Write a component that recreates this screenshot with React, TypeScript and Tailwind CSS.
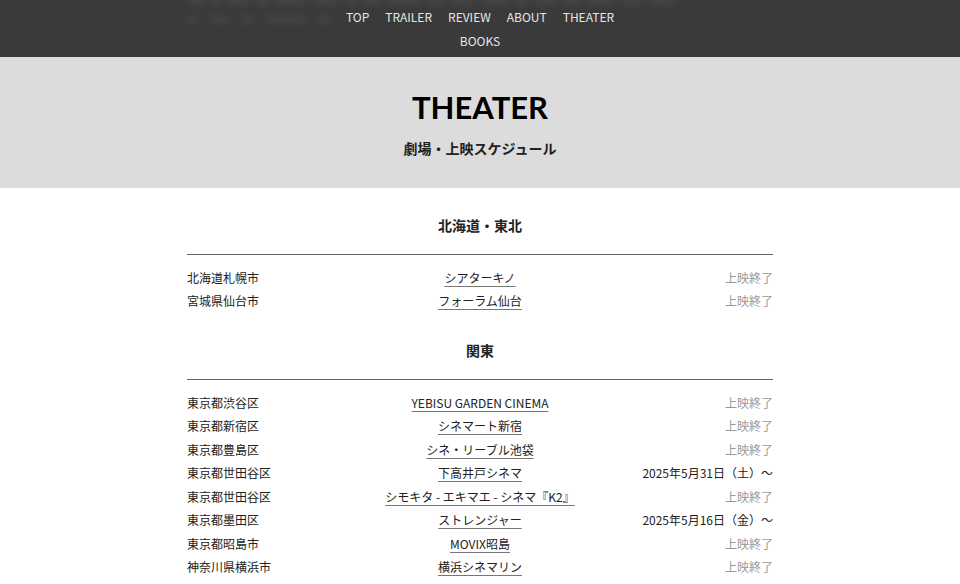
import React from "react";

const jp = { fontFamily: '"Noto Sans CJK JP", "Noto Sans", sans-serif' };

type Row = { area: string; name: string; status: string };

const sections: { title: string; rows: Row[] }[] = [
  {
    title: "北海道・東北",
    rows: [
      { area: "北海道札幌市", name: "シアターキノ", status: "上映終了" },
      { area: "宮城県仙台市", name: "フォーラム仙台", status: "上映終了" },
    ],
  },
  {
    title: "関東",
    rows: [
      { area: "東京都渋谷区", name: "YEBISU GARDEN CINEMA", status: "上映終了" },
      { area: "東京都新宿区", name: "シネマート新宿", status: "上映終了" },
      { area: "東京都豊島区", name: "シネ・リーブル池袋", status: "上映終了" },
      { area: "東京都世田谷区", name: "下高井戸シネマ", status: "2025年5月31日（土）～" },
      { area: "東京都世田谷区", name: "シモキタ - エキマエ - シネマ『K2』", status: "上映終了" },
      { area: "東京都墨田区", name: "ストレンジャー", status: "2025年5月16日（金）～" },
      { area: "東京都昭島市", name: "MOVIX昭島", status: "上映終了" },
      { area: "神奈川県横浜市", name: "横浜シネマリン", status: "上映終了" },
    ],
  },
];

const blobs1 = [18, 10, 22, 14, 30, 26, 12, 20, 34, 16, 24, 28, 14, 22, 18, 30, 20, 26];
const blobs2 = [8, 14, 10, 30, 10];

export default function App() {
  return (
    <div className="min-h-screen bg-white text-[#222]" style={jp}>
      <header className="fixed top-0 left-0 right-0 z-10 h-[57px] bg-[#3a3a3a] overflow-hidden">
        <div className="absolute left-[188px] top-[-3px] w-[586px] blur-[3px] opacity-70">
          <div className="flex gap-[6px] h-[8px]">
            {blobs1.map((w, i) => (
              <div key={i} className="h-[8px] bg-[#4a4a4a]" style={{ width: w }} />
            ))}
          </div>
          <div className="flex gap-[12px] mt-[11px]">
            {blobs2.map((w, i) => (
              <div key={i} className="h-[7px] bg-[#4a4a4a]" style={{ width: w * 1.3 }} />
            ))}
          </div>
        </div>
        <nav className="relative mx-auto w-[300px] pt-[5px] flex flex-wrap justify-center gap-x-4 text-[12px] leading-[24px] text-[#e6e6e6]">
          <span>TOP</span>
          <span>TRAILER</span>
          <span>REVIEW</span>
          <span>ABOUT</span>
          <span>THEATER</span>
          <span>BOOKS</span>
        </nav>
      </header>

      <section className="pt-[57px] bg-[#dcdcdc]">
        <div className="h-[131px] flex flex-col items-center">
          <h1
            className="mt-[30px] text-[31px] leading-[40px] font-bold text-black"
            style={{ fontFamily: 'Lato, "Noto Sans", sans-serif' }}
          >
            THEATER
          </h1>
          <p className="mt-[10px] text-[14px] leading-[22px] font-bold text-[#222]">劇場・上映スケジュール</p>
        </div>
      </section>

      <main className="w-[586px] mx-auto pt-[25px]">
        {sections.map((s, i) => (
          <div key={s.title} className={i > 0 ? "mt-[25px]" : ""}>
            <h2 className="text-center text-[14px] leading-[24px] font-bold text-[#222]">{s.title}</h2>
            <div className="mt-[17px] border-t border-[#666]" />
            <div className="mt-[11px]">
              {s.rows.map((r, j) => (
                <div key={j} className="grid grid-cols-[1fr_auto_1fr] items-center h-[23.5px] text-[12px]">
                  <span className="text-[#222]">{r.area}</span>
                  <span className="text-center underline underline-offset-[3px] decoration-[#777] text-[#222]">{r.name}</span>
                  <span className={"text-right " + (r.status === "上映終了" ? "text-[#999]" : "text-[#222]")}>
                    {r.status}
                  </span>
                </div>
              ))}
            </div>
          </div>
        ))}
      </main>
    </div>
  );
}
